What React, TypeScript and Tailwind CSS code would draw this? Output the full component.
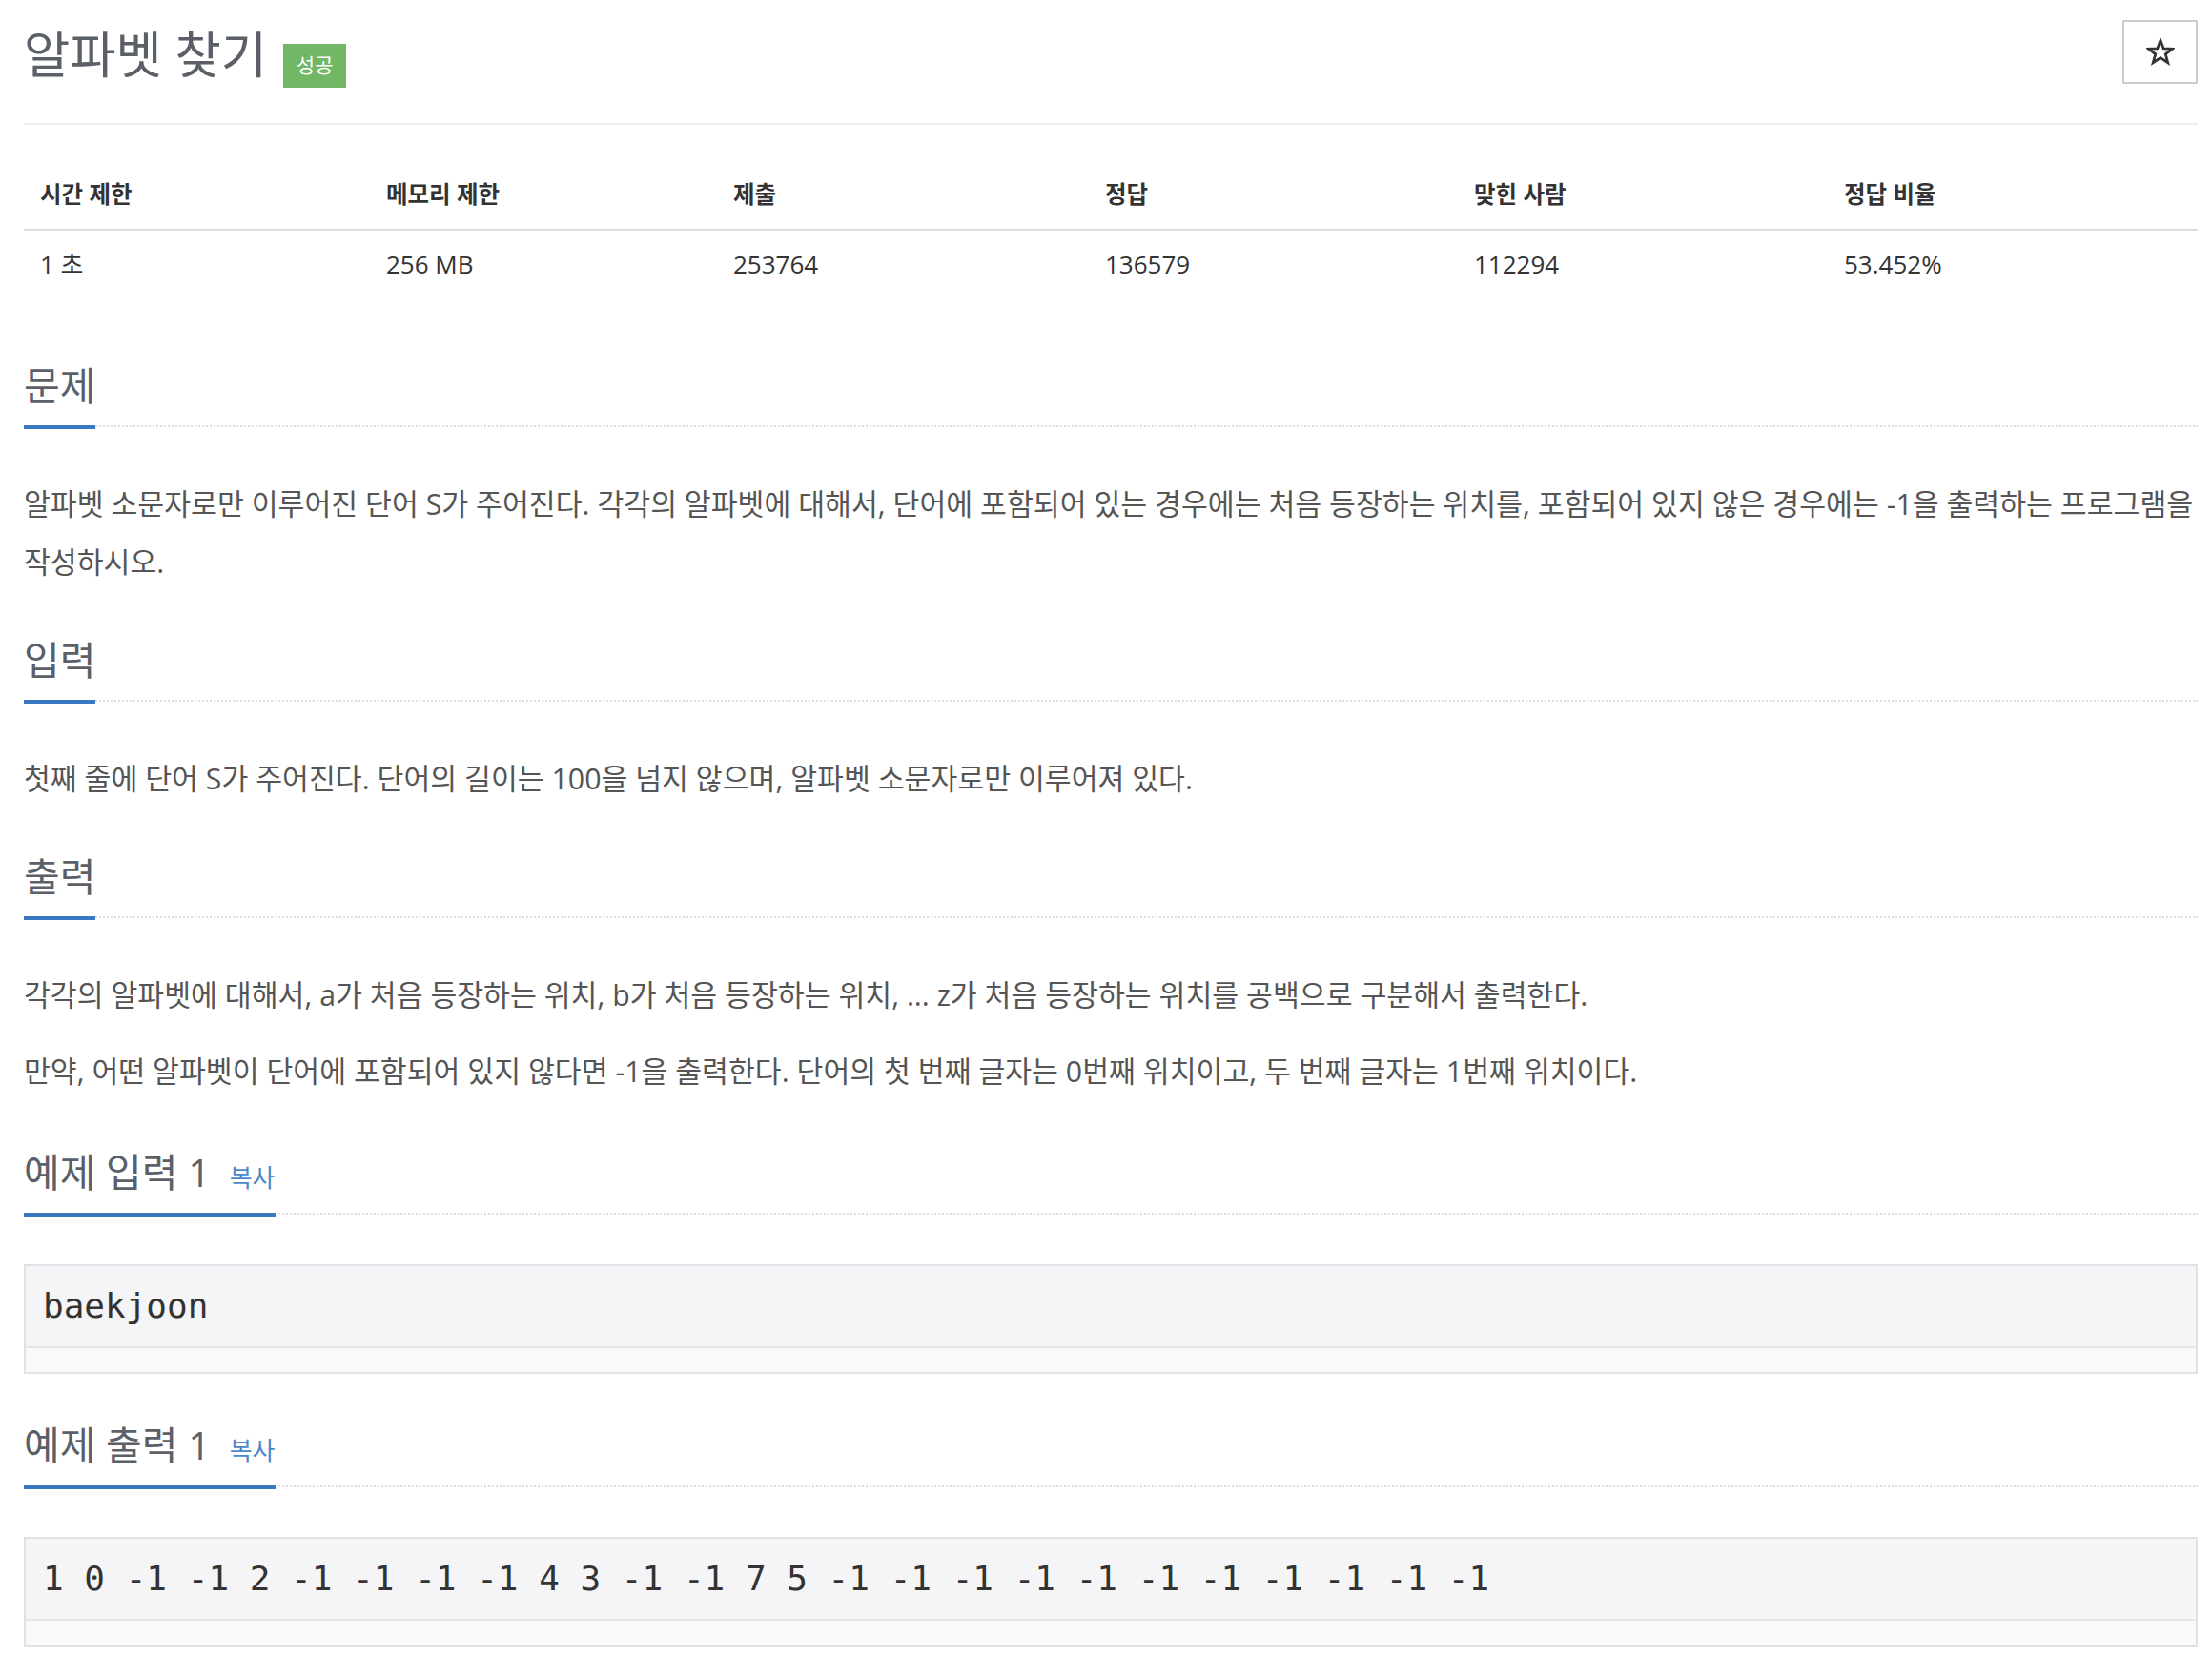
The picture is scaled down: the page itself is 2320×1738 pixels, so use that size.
import React from "react";

function SectionHeading({ children, copy }: { children: React.ReactNode; copy?: boolean }) {
  return (
    <div className="flex border-b-2 border-dotted border-[#dddddd]">
      <h2
        className={
          copy
            ? "-mb-[4px] border-b-4 border-[#3a78c1] pb-[19px] text-[41px] leading-[48px] font-normal text-[#5b6068] whitespace-nowrap"
            : "-mb-[4px] border-b-4 border-[#3a78c1] pb-[18px] text-[41px] leading-[48px] font-normal text-[#5b6068] whitespace-nowrap"
        }
      >
        {children}
        {copy && (
          <span className="ml-[20px] pr-[2px] text-[26px] leading-none text-[#4a88c8]">복사</span>
        )}
      </h2>
    </div>
  );
}

function SampleBox({ text }: { text: string }) {
  return (
    <div className="border-2 border-[#e1e1e6]">
      <div className="flex h-[84px] items-center bg-[#f5f5f7] px-[18px]">
        <pre className="font-['DejaVu_Sans_Mono',monospace] text-[36px] leading-[44px] text-[#333333]">{text}</pre>
      </div>
      <div className="h-[27px] border-t-2 border-[#e6e6ea] bg-[#f9f9f9]" />
    </div>
  );
}

export default function App() {
  const headers = ["시간 제한", "메모리 제한", "제출", "정답", "맞힌 사람", "정답 비율"];
  const values = ["1 초", "256 MB", "253764", "136579", "112294", "53.452%"];

  return (
    <div className="min-h-[1738px] bg-white pl-[25px] pr-[15px] pt-[21px] font-['Open_Sans','Noto_Sans_CJK_KR',sans-serif]">
      {/* Title row */}
      <div className="flex h-[67px] items-start justify-between">
        <div className="flex items-start">
          <h1 className="mt-[6px] text-[52.5px] leading-[60px] font-normal text-[#5b6068]">알파벳 찾기</h1>
          <span className="ml-[17px] mt-[25px] flex h-[46px] w-[66px] items-center justify-center bg-[#71b766] text-[21px] text-white">
            성공
          </span>
        </div>
        <button className="flex h-[67px] w-[79px] items-center justify-center border-2 border-[#cccccc] bg-white">
          <svg width="30" height="29" viewBox="0 0 24 23" fill="none">
            <path
              d="M12 1.8 L14.6 8.6 L21.9 8.9 L16.2 13.4 L18.2 20.5 L12 16.4 L5.8 20.5 L7.8 13.4 L2.1 8.9 L9.4 8.6 Z"
              stroke="#333333"
              strokeWidth="2.2"
              strokeLinejoin="miter"
            />
          </svg>
        </button>
      </div>

      <div className="mt-[41px] border-t-2 border-[#eeeeee]" />

      {/* Info table */}
      <div className="mt-[37px] grid grid-cols-[363px_364px_390px_387px_388px_1fr]">
        {headers.map((h) => (
          <div
            key={h}
            className="border-b-2 border-[#dddddd] py-[19px] pl-[17px] text-[24.5px] leading-[34px] font-bold text-[#333333]"
          >
            {h}
          </div>
        ))}
        {values.map((v) => (
          <div key={v} className="py-[18px] pl-[17px] text-[26px] leading-[34px] text-[#333333]">
            {v}
          </div>
        ))}
      </div>

      {/* 문제 */}
      <section className="mt-[68px]">
        <SectionHeading>문제</SectionHeading>
        <div className="mt-[50px] text-[30.3px] leading-[61px] text-[#555555]">
          <p>
            알파벳 소문자로만 이루어진 단어 S가 주어진다. 각각의 알파벳에 대해서, 단어에 포함되어 있는 경우에는 처음 등장하는 위치를, 포함되어 있지 않은 경우에는 -1을 출력하는 프로그램을 작성하시오.
          </p>
        </div>
      </section>

      {/* 입력 */}
      <section className="mt-[48px]">
        <SectionHeading>입력</SectionHeading>
        <div className="mt-[50px] text-[30.3px] leading-[61px] text-[#555555]">
          <p>첫째 줄에 단어 S가 주어진다. 단어의 길이는 100을 넘지 않으며, 알파벳 소문자로만 이루어져 있다.</p>
        </div>
      </section>

      {/* 출력 */}
      <section className="mt-[48px]">
        <SectionHeading>출력</SectionHeading>
        <div className="mt-[50px] flex flex-col gap-[19px] text-[30.3px] leading-[61px] text-[#555555]">
          <p>각각의 알파벳에 대해서, a가 처음 등장하는 위치, b가 처음 등장하는 위치, ... z가 처음 등장하는 위치를 공백으로 구분해서 출력한다.</p>
          <p>만약, 어떤 알파벳이 단어에 포함되어 있지 않다면 -1을 출력한다. 단어의 첫 번째 글자는 0번째 위치이고, 두 번째 글자는 1번째 위치이다.</p>
        </div>
      </section>

      {/* 예제 입력 1 */}
      <section className="mt-[51px]">
        <SectionHeading copy>예제 입력 1</SectionHeading>
        <div className="mt-[52px]">
          <SampleBox text="baekjoon" />
        </div>
      </section>

      {/* 예제 출력 1 */}
      <section className="mt-[50px]">
        <SectionHeading copy>예제 출력 1</SectionHeading>
        <div className="mt-[52px]">
          <SampleBox text="1 0 -1 -1 2 -1 -1 -1 -1 4 3 -1 -1 7 5 -1 -1 -1 -1 -1 -1 -1 -1 -1 -1 -1" />
        </div>
      </section>
    </div>
  );
}
